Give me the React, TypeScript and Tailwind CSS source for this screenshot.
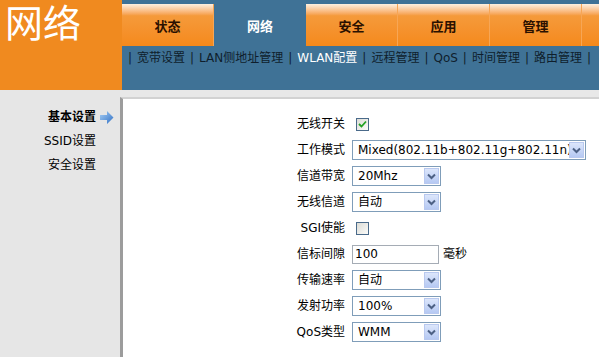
import React from "react"

const tabs = ["状态", "网络", "安全", "应用", "管理"]
const subNav = ["宽带设置", "LAN侧地址管理", "WLAN配置", "远程管理", "QoS", "时间管理", "路由管理"]
const side = ["基本设置", "SSID设置", "安全设置"]

const font = { fontFamily: '"DejaVu Sans", "Noto Sans CJK SC", sans-serif' }

function Arrow() {
  return (
    <svg width="14" height="13" viewBox="0 0 14 13">
      <defs>
        <linearGradient id="ag" x1="0" y1="0" x2="1" y2="1">
          <stop offset="0" stopColor="#a9d0f5" />
          <stop offset="1" stopColor="#2f6fc4" />
        </linearGradient>
      </defs>
      <polygon points="0,4 7,4 7,0 13.5,6.5 7,13 7,9 0,9" fill="url(#ag)" />
    </svg>
  )
}

function DropBtn() {
  return (
    <div className="flex h-full w-[15px] items-center justify-center border border-[#b9c9ef] bg-gradient-to-b from-[#dce6fb] to-[#b6c9f3]">
      <svg width="9" height="7" viewBox="0 0 9 7">
        <path d="M1 1.5 L4.5 5 L8 1.5" stroke="#4d6185" strokeWidth="2" fill="none" />
      </svg>
    </div>
  )
}

function Select({ value, wide }: { value: string; wide?: boolean }) {
  return (
    <div
      className={`flex h-[20px] items-stretch border border-[#7f9db9] bg-white p-[1px] ${wide ? "w-[234px]" : "w-[89px]"}`}
    >
      <div className="flex-1 overflow-hidden whitespace-nowrap pl-[4px] text-[12px] leading-[17px] text-black">{value}</div>
      <DropBtn />
    </div>
  )
}

function Check({ checked }: { checked?: boolean }) {
  return (
    <div className="ml-[4px] flex h-[13px] w-[13px] items-center justify-center border border-[#4a6a8a] bg-gradient-to-br from-[#dcdcd6] to-[#fbfbf9]">
      {checked && (
        <svg width="9" height="8" viewBox="0 0 9 8">
          <path d="M1 4 L3.5 6.5 L8 1.5" stroke="#21a121" strokeWidth="1.8" fill="none" />
        </svg>
      )}
    </div>
  )
}

const rows: { label: string; control: React.ReactNode }[] = [
  { label: "无线开关", control: <Check checked /> },
  { label: "工作模式", control: <Select value="Mixed(802.11b+802.11g+802.11n)" wide /> },
  { label: "信道带宽", control: <Select value="20Mhz" /> },
  { label: "无线信道", control: <Select value="自动" /> },
  { label: "SGI使能", control: <Check /> },
  {
    label: "信标间隙",
    control: (
      <div className="flex items-center">
        <div className="h-[19px] w-[87px] border border-[#a5acb5] bg-white pl-[2px] text-[12px] leading-[17px]">100</div>
        <span className="ml-[4px] text-[12px]">毫秒</span>
      </div>
    ),
  },
  { label: "传输速率", control: <Select value="自动" /> },
  { label: "发射功率", control: <Select value="100%" /> },
  { label: "QoS类型", control: <Select value="WMM" /> },
]

export default function App() {
  return (
    <div className="flex h-[357px] w-[599px] flex-col overflow-hidden bg-[#e8e8e8]" style={font}>
      {/* header */}
      <div className="flex h-[90px]">
        <div className="w-[122px] bg-[#f08a1f] pl-[5px] pt-[2px] text-[38px] leading-[44px] text-white">网络</div>
        <div className="flex flex-1 flex-col bg-[#3f7296] pt-[4px]">
          <div className="flex h-[42px]">
            {tabs.map((t, i) =>
              i === 1 ? (
                <div key={t} className="flex w-[92px] items-center justify-center pt-[4px] text-[13px] font-bold text-white">
                  {t}
                </div>
              ) : (
                <div
                  key={t}
                  className="flex w-[92px] shrink-0 items-center justify-center bg-gradient-to-b from-[#fdf0e0] via-[#f59a3a] via-[28%] to-[#f5891a] pt-[4px] text-[13px] font-bold text-[#2a1000] border-r border-r-[#f7a655]"
                >
                  {t}
                </div>
              )
            )}
            <div className="flex-1 bg-gradient-to-b from-[#fdf0e0] via-[#f59a3a] via-[28%] to-[#f5891a]" />
          </div>
          <div className="mt-[5px] flex pl-[6px] text-[12px] leading-[14px] text-[#0f1e2c]">
            <span className="mr-[5px]">|</span>
            {subNav.map((s) => (
              <React.Fragment key={s}>
                <span className={s === "WLAN配置" ? "text-white" : ""}>{s}</span>
                <span className="mx-[5px]">|</span>
              </React.Fragment>
            ))}
          </div>
        </div>
      </div>

      {/* body */}
      <div className="flex flex-1">
        <div className="w-[120px] bg-[#e6e6e6] pt-[15px] pr-[6px] text-[12px] text-black">
          {side.map((s, i) => (
            <div key={s} className="flex h-[24px] items-center justify-end">
              <span className={i === 0 ? "font-bold" : ""}>{s}</span>
              <span className="ml-[4px] flex w-[14px]">{i === 0 && <Arrow />}</span>
            </div>
          ))}
        </div>
        <div className="flex flex-1 flex-col pt-[7px]">
          <div className="flex-1 border-l-[3px] border-t-[2px] border-l-[#9c9c9c] border-t-[#d2d2d2] bg-white pt-[12px]">
            {rows.map((r) => (
              <div key={r.label} className="flex h-[26px] items-center">
                <div className="w-[222px] text-right text-[12px] text-black">{r.label}</div>
                <div className="ml-[7px] flex items-center">{r.control}</div>
              </div>
            ))}
          </div>
        </div>
      </div>
    </div>
  )
}
